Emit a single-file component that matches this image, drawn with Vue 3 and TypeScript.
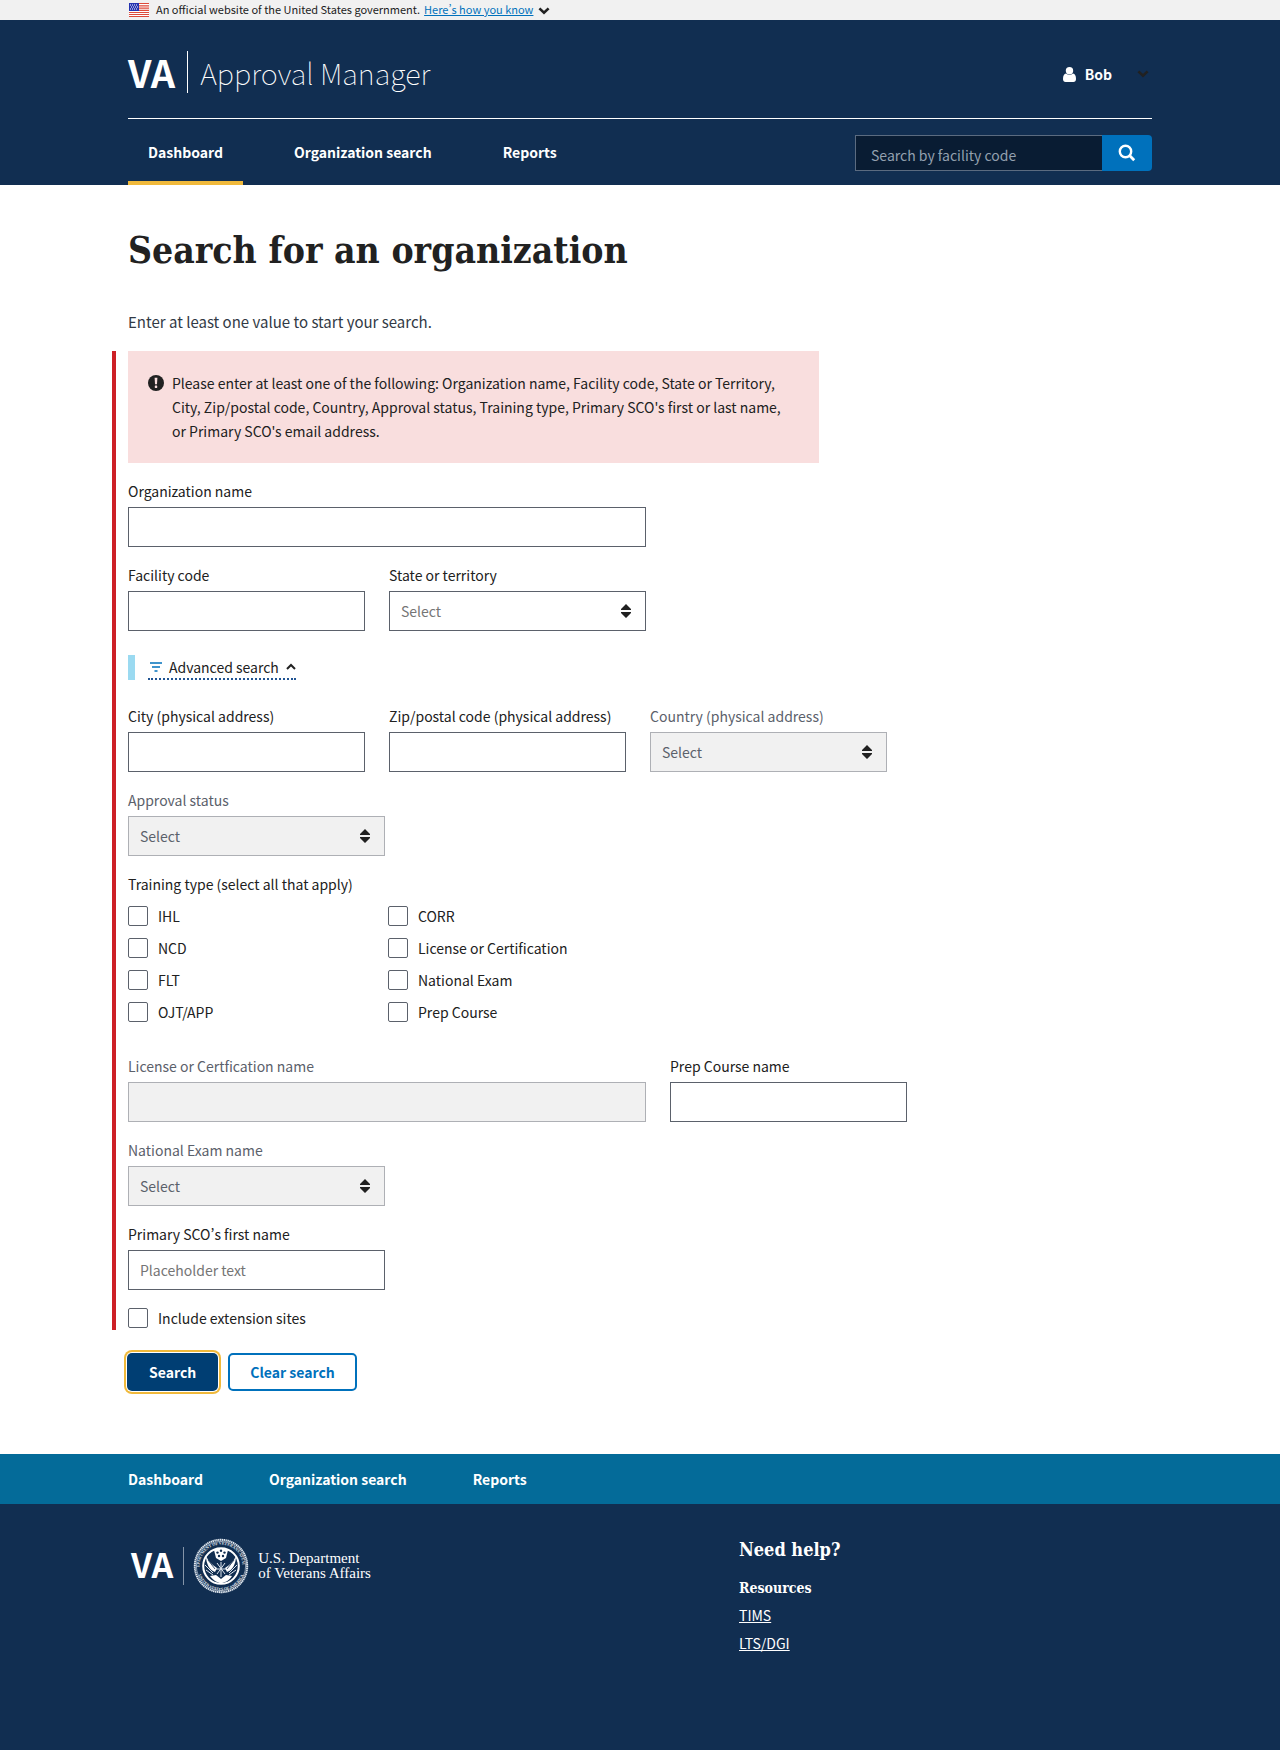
<script setup lang="ts">
import { reactive, ref } from 'vue'

interface NavItem {
  label: string
  active?: boolean
}

const navItems: NavItem[] = [
  { label: 'Dashboard', active: true },
  { label: 'Organization search' },
  { label: 'Reports' },
]

const trainingTypes: string[] = [
  'IHL',
  'NCD',
  'FLT',
  'OJT/APP',
  'CORR',
  'License or Certification',
  'National Exam',
  'Prep Course',
]

const form = reactive({
  organization: '',
  facilityCode: '',
  state: '',
  city: '',
  zip: '',
  country: '',
  approvalStatus: '',
  training: [] as string[],
  license: '',
  prepCourse: '',
  exam: '',
  scoFirstName: '',
  extensions: false,
})

const quickSearch = ref('')
const advancedOpen = ref(true)

function clearSearch(): void {
  Object.assign(form, {
    organization: '',
    facilityCode: '',
    state: '',
    city: '',
    zip: '',
    prepCourse: '',
    scoFirstName: '',
    training: [],
    extensions: false,
  })
}
</script>

<template>
  <div class="page">
    <div class="banner">
      <div class="wrap banner-row">
        <svg class="flag" width="20" height="14" viewBox="0 0 20 14" aria-hidden="true">
          <rect width="20" height="14" fill="#fff" />
          <path d="M0 .5h20M0 2.800h20M0 5.100h20M0 7.400h20M0 9.500h20M0 11.500h20M0 13.500h20" stroke="#dd4a3a" stroke-width="1.200" />
          <rect width="10" height="8" fill="#2433b0" />
          <path d="M1 2h8M2 4h8M1 6h8" stroke="#fff" stroke-width="1" stroke-dasharray="1 1" />
        </svg>
        <span>An official website of the United States government.</span>
        <a href="#" class="banner-link">Here’s how you know</a>
        <svg class="banner-chevron" width="12" height="8" viewBox="0 0 12 8" aria-hidden="true">
          <path d="M1.400 1.400 6 5.800l4.600-4.400" fill="none" stroke="#212121" stroke-width="2.600" />
        </svg>
      </div>
    </div>

    <header class="header">
      <div class="wrap">
        <div class="brand-row">
          <div class="brand">
            <span class="va">VA</span>
            <span class="brand-name">Approval Manager</span>
          </div>
          <button type="button" class="user">
            <svg width="13" height="15" viewBox="0 0 13 15" aria-hidden="true">
              <circle cx="6.500" cy="3.700" r="3.700" fill="#fff" />
              <path d="M3 6.600C1 7 0 9 0 12c0 2 1 3 2.600 3h7.800C12 15 13 14 13 12c0-3-1-5-3-5.400-2 1.900-5 1.900-7 0z" fill="#fff" />
            </svg>
            <span>Bob</span>
            <svg class="user-chevron" width="12" height="8" viewBox="0 0 12 8" aria-hidden="true">
              <path d="M1.400 1.400 6 5.800l4.600-4.400" fill="none" stroke="#212121" stroke-width="2.600" />
            </svg>
          </button>
        </div>
        <div class="nav-row">
          <nav class="nav" aria-label="Primary">
            <a v-for="item in navItems" :key="item.label" href="#" class="nav-link" :class="{ active: item.active }">{{ item.label }}</a>
          </nav>
          <form class="quick" role="search" @submit.prevent>
            <input v-model="quickSearch" type="text" placeholder="Search by facility code" aria-label="Search by facility code" />
            <button type="submit" aria-label="Search">
              <svg width="18" height="18" viewBox="0 0 18 18" fill="none" stroke="#fff" aria-hidden="true">
                <circle cx="7.500" cy="7.500" r="5.700" stroke-width="2.400" />
                <path d="m11.600 11.600 4.600 4.600" stroke-width="2.800" />
              </svg>
            </button>
          </form>
        </div>
      </div>
    </header>

    <main class="wrap main">
      <h1>Search for an organization</h1>
      <p class="intro">Enter at least one value to start your search.</p>

      <form @submit.prevent>
        <div class="fields">
          <div class="alert" role="alert">
            <svg width="16" height="16" viewBox="0 0 16 16" aria-hidden="true">
              <circle cx="8" cy="8" r="8" fill="#212121" />
              <path d="M6.600 2.800h2.800L9 9.200H7z" fill="#f9dede" />
              <rect x="6.800" y="10.600" width="2.400" height="2.400" rx=".4" fill="#f9dede" />
            </svg>
            <p>Please enter at least one of the following: Organization name, Facility code, State or Territory, City, Zip/postal code, Country, Approval status, Training type, Primary SCO's first or last name, or Primary SCO's email address.</p>
          </div>

          <div class="field w-lg">
            <label for="org">Organization name</label>
            <input id="org" v-model="form.organization" type="text" />
          </div>

          <div class="row">
            <div class="field w-sm">
              <label for="facility">Facility code</label>
              <input id="facility" v-model="form.facilityCode" type="text" />
            </div>
            <div class="field w-md">
              <label for="state">State or territory</label>
              <div class="select">
                <select id="state" v-model="form.state"><option value="">Select</option></select>
                <svg width="10" height="14" viewBox="0 0 10 14" aria-hidden="true"><path d="M5 0l5 5v1H0V5zM5 14l5-5V8H0v1z" fill="#212121" /></svg>
              </div>
            </div>
          </div>

          <div class="advanced">
            <button type="button" :aria-expanded="advancedOpen" @click="advancedOpen = !advancedOpen">
              <svg width="14" height="12" viewBox="0 0 14 12" stroke="#0071bc" stroke-width="1.600" aria-hidden="true">
                <path d="M2 2h12M4 6h8M6.500 10h3" />
              </svg>
              <span>Advanced search</span>
              <svg width="10" height="8" viewBox="0 0 10 8" aria-hidden="true">
                <path d="M1 6l4-4 4 4" fill="none" stroke="#212121" stroke-width="2" />
              </svg>
            </button>
          </div>

          <template v-if="advancedOpen">
            <div class="row">
              <div class="field w-sm">
                <label for="city">City (physical address)</label>
                <input id="city" v-model="form.city" type="text" />
              </div>
              <div class="field w-sm">
                <label for="zip">Zip/postal code (physical address)</label>
                <input id="zip" v-model="form.zip" type="text" />
              </div>
              <div class="field w-sm disabled">
                <label for="country">Country (physical address)</label>
                <div class="select">
                  <select id="country" v-model="form.country" disabled><option value="">Select</option></select>
                  <svg width="10" height="14" viewBox="0 0 10 14" aria-hidden="true"><path d="M5 0l5 5v1H0V5zM5 14l5-5V8H0v1z" fill="#212121" /></svg>
                </div>
              </div>
            </div>

            <div class="field w-md disabled">
              <label for="status">Approval status</label>
              <div class="select">
                <select id="status" v-model="form.approvalStatus" disabled><option value="">Select</option></select>
                <svg width="10" height="14" viewBox="0 0 10 14" aria-hidden="true"><path d="M5 0l5 5v1H0V5zM5 14l5-5V8H0v1z" fill="#212121" /></svg>
              </div>
            </div>

            <fieldset class="training">
              <legend>Training type (select all that apply)</legend>
              <div class="checks">
                <label v-for="type in trainingTypes" :key="type" class="check">
                  <input v-model="form.training" type="checkbox" :value="type" />
                  <span>{{ type }}</span>
                </label>
              </div>
            </fieldset>

            <div class="row">
              <div class="field w-lg disabled">
                <label for="license">License or Certfication name</label>
                <input id="license" v-model="form.license" type="text" disabled />
              </div>
              <div class="field w-sm">
                <label for="prep">Prep Course name</label>
                <input id="prep" v-model="form.prepCourse" type="text" />
              </div>
            </div>

            <div class="field w-md disabled">
              <label for="exam">National Exam name</label>
              <div class="select">
                <select id="exam" v-model="form.exam" disabled><option value="">Select</option></select>
                <svg width="10" height="14" viewBox="0 0 10 14" aria-hidden="true"><path d="M5 0l5 5v1H0V5zM5 14l5-5V8H0v1z" fill="#212121" /></svg>
              </div>
            </div>

            <div class="field w-md">
              <label for="sco">Primary SCO’s first name</label>
              <input id="sco" v-model="form.scoFirstName" type="text" placeholder="Placeholder text" />
            </div>

            <label class="check">
              <input v-model="form.extensions" type="checkbox" />
              <span>Include extension sites</span>
            </label>
          </template>
        </div>

        <div class="actions">
          <button type="submit" class="btn primary">Search</button>
          <button type="button" class="btn outline" @click="clearSearch">Clear search</button>
        </div>
      </form>
    </main>

    <footer class="footer">
      <div class="footer-bar">
        <nav class="wrap footer-nav" aria-label="Footer">
          <a v-for="item in navItems" :key="item.label" href="#">{{ item.label }}</a>
        </nav>
      </div>
      <div class="wrap footer-body">
        <div class="dept">
          <span class="va va-small">VA</span>
          <svg class="seal" width="56" height="56" viewBox="0 0 56 56" aria-hidden="true">
            <defs>
              <path id="seal-top" d="M6.500 28a21.500 21.500 0 0 1 43 0" />
              <path id="seal-bottom" d="M3.500 28a24.500 24.500 0 0 0 49 0" />
            </defs>
            <circle cx="28" cy="28" r="26.200" fill="none" stroke="#dfe6ee" stroke-width="2" stroke-dasharray="1.400 .5" />
            <circle cx="28" cy="28" r="24.600" fill="none" stroke="#dfe6ee" stroke-width=".6" />
            <text font-size="4" fill="#e6ecf3"><textPath href="#seal-top" startOffset="50%" text-anchor="middle">DEPARTMENT OF VETERANS AFFAIRS</textPath></text>
            <text font-size="4" fill="#e6ecf3"><textPath href="#seal-bottom" startOffset="50%" text-anchor="middle">UNITED STATES OF AMERICA</textPath></text>
            <circle cx="28" cy="28" r="17.800" fill="#112e51" stroke="#fff" stroke-width="2" />
            <path d="M21 12c4-2 10-2 14 0l-2 8-5 3-5-3z" fill="#fff" />
            <path d="M13 18c2 5 6 9 11 12l-2 4c-6-2-9-9-9-16zM43 18c-2 5-6 9-11 12l2 4c6-2 9-9 9-16z" fill="#fff" />
            <path d="M17 38c4 5 8 7 11 7s8-2 11-7l-6-1-5 4-5-4z" fill="#fff" />
            <path d="M12 27l8 8M44 27l-8 8M13 32l7 5M43 32l-7 5M24 25l8 11M32 25l-8 11M28 24v15M23 31h10" stroke="#dfe6ee" stroke-width="1" />
            <path d="M15 22l7 9M41 22l-7 9" stroke="#112e51" stroke-width=".8" />
            <g fill="#112e51">
              <circle cx="28" cy="12.800" r="1.200" /><circle cx="24.500" cy="14.600" r="1.200" /><circle cx="31.500" cy="14.600" r="1.200" />
              <circle cx="26" cy="18" r="1.200" /><circle cx="30" cy="18" r="1.200" />
            </g>
          </svg>
          <p class="dept-name">U.S. Department<br />of Veterans Affairs</p>
        </div>
        <div class="help">
          <h2>Need help?</h2>
          <h3>Resources</h3>
          <a href="#">TIMS</a>
          <a href="#">LTS/DGI</a>
        </div>
      </div>
    </footer>
  </div>
</template>

<style>
body {
  margin: 0;
  background: #fff;
}
</style>

<style scoped>
.page {
  display: flex;
  flex-direction: column;
  min-height: 100vh;
  color: #212121;
  font-family: 'Noto Sans CJK SC', 'Open Sans', sans-serif;
  font-size: 14px;
  font-variant-east-asian: proportional-width;
  line-height: 20px;
}

.page * {
  box-sizing: border-box;
}

.page button,
.page input,
.page select {
  margin: 0;
  font: inherit;
}

p,
h1,
h2,
h3 {
  margin: 0;
}

.wrap {
  width: 80%;
  margin: 0 auto;
}

.banner {
  background: #f1f1f1;
}

.banner-row {
  display: flex;
  align-items: center;
  height: 20px;
  font-size: 11px;
  line-height: 16px;
}

.banner-row span,
.banner-row a {
  padding-bottom: 2px;
}

.flag {
  margin: 0 7px 0 1px;
}

.banner-link {
  margin-left: 4px;
  color: #0071bc;
}

.banner-chevron {
  margin: 2px 0 0 5px;
}

.header {
  background: #112e51;
  color: #fff;
}

.brand-row {
  display: flex;
  align-items: center;
  justify-content: space-between;
  height: 99px;
  padding-top: 10px;
  border-bottom: 1px solid #fff;
}

.brand {
  display: flex;
  align-items: center;
  padding-bottom: 4px;
}

.va {
  font-size: 38px;
  line-height: 42px;
  font-weight: 700;
}

.brand-name {
  margin-left: 12px;
  padding-left: 12px;
  border-left: 1px solid #fff;
  font-size: 29px;
  font-weight: 100;
  line-height: 42px;
}

.user {
  display: flex;
  align-items: center;
  padding: 0 3px 0 0;
  border: 0;
  background: none;
  color: #fff;
}

.page .user {
  font-weight: 700;
}

.user span {
  margin: 0 25px 0 9px;
}

.nav-row {
  display: flex;
  align-items: center;
  justify-content: space-between;
  height: 66px;
}

.nav {
  display: flex;
  gap: 31px;
  height: 100%;
}

.nav-link {
  padding: 23px 20px 0;
  border-bottom: 4px solid transparent;
  color: #fff;
  font-weight: 700;
  text-decoration: none;
}

.nav-link.active {
  border-color: #f0b93b;
}

.quick {
  display: flex;
  width: 297px;
  height: 36px;
  margin-top: 2px;
}

.quick input {
  flex: 1;
  min-width: 0;
  padding: 4px 15px 0;
  border: 1px solid #5b6b80;
  border-right: 0;
  border-radius: 0;
  background: #091c33;
  color: #fff;
}

.quick input::placeholder {
  color: #93a0af;
}

.quick button {
  display: flex;
  align-items: center;
  justify-content: center;
  width: 50px;
  padding: 0;
  border: 0;
  border-radius: 0 4px 4px 0;
  background: #0071bc;
}

.main {
  padding: 39px 0 63px;
}

h1 {
  font-family: 'DejaVu Serif Condensed', 'DejaVu Serif', serif;
  font-size: 37px;
  line-height: 52px;
  font-weight: 700;
}

.intro {
  margin: 36px 0 19px;
  color: #323a45;
  font-size: 15px;
  line-height: 20px;
}

.fields {
  display: flex;
  flex-direction: column;
  gap: 18px;
  margin-left: -16px;
  padding: 0 0 2px 12px;
  border-left: 4px solid #cd2026;
}

.alert {
  display: flex;
  gap: 8px;
  max-width: 691px;
  padding: 20px 28px 20px 20px;
  background: #f9dede;
  line-height: 24px;
}

.alert svg {
  flex: none;
  margin-top: 4px;
}

.row {
  display: flex;
  flex-wrap: wrap;
  gap: 18px 24px;
}

.w-sm {
  width: 237px;
}

.w-md {
  width: 257px;
}

.w-lg {
  width: 518px;
}

.field > label {
  display: block;
  margin-bottom: 6px;
  white-space: nowrap;
}

.field input,
.field select {
  display: block;
  width: 100%;
  height: 40px;
  padding: 0 11px;
  border: 1px solid #5b616b;
  border-radius: 0;
  background: #fff;
  color: #757575;
}

.field select {
  appearance: none;
  opacity: 1;
}

.field input::placeholder {
  color: #757575;
}

.disabled > label {
  color: #5b616b;
}

.disabled input,
.disabled select {
  border-color: #aeb0b5;
  background: #f1f1f1;
  color: #5b616b;
}

.select {
  position: relative;
}

.select svg {
  position: absolute;
  top: 13px;
  right: 15px;
  pointer-events: none;
}

.advanced {
  margin: 6px 0 8px;
  padding-left: 13px;
  border-left: 7px solid #9bdaf1;
}

.advanced button {
  display: flex;
  align-items: center;
  gap: 7px;
  height: 25px;
  padding: 0;
  border: 0;
  border-bottom: 2px dotted #205493;
  background: none;
  color: #212121;
}

.training {
  min-width: 0;
  margin: 0 0 16px;
  padding: 0;
  border: 0;
}

.training legend {
  margin-bottom: 12px;
  padding: 0;
}

.checks {
  display: grid;
  grid-template-rows: repeat(4, 20px);
  grid-auto-flow: column;
  grid-auto-columns: 260px;
  gap: 12px 0;
}

.check {
  display: flex;
  align-items: center;
  gap: 10px;
}

.check input {
  appearance: none;
  width: 20px;
  height: 20px;
  border: 1px solid #5b616b;
  border-radius: 2px;
  background: #fff;
}

.check input:checked {
  background: #0071bc;
}

.actions {
  display: flex;
  gap: 10px;
  margin: 23px 0 0 -1px;
}

.btn {
  height: 38px;
  border-radius: 5px;
}

.page .btn {
  font-weight: 700;
  line-height: 24px;
}

.primary {
  padding: 0 22px;
  border: 0;
  background: #003e73;
  color: #fff;
  box-shadow: 0 0 0 1px #fff, 0 0 0 3px #f0b93b;
}

.outline {
  padding: 0 20px;
  border: 2px solid #0071bc;
  background: #fff;
  color: #0071bc;
}

.footer {
  display: flex;
  flex: 1;
  flex-direction: column;
  background: #112e51;
  color: #fff;
}

.footer a {
  color: #fff;
}

.footer-bar {
  background: #046b99;
}

.footer-nav {
  display: flex;
  gap: 66px;
  align-items: center;
  height: 50px;
  font-weight: 700;
}

.footer-nav a {
  text-decoration: none;
}

.footer-body {
  display: grid;
  grid-template-columns: 611px 1fr;
  align-items: start;
  padding: 32px 0 80px;
}

.dept {
  display: flex;
  align-items: center;
  padding: 2px 0 0 3px;
}

.va-small {
  padding: 0 10px 4px 0;
  border-right: 1px solid #8494a8;
  font-size: 34px;
  line-height: 34px;
}

.seal {
  margin: 0 9px;
}

.seal text {
  font-family: 'Liberation Serif', serif;
  font-weight: 700;
}

.dept-name {
  font-family: 'Liberation Serif', serif;
  font-size: 15px;
  line-height: 15px;
}

.help {
  display: flex;
  flex-direction: column;
  align-items: flex-start;
}

.help h2,
.help h3 {
  font-family: 'DejaVu Serif Condensed', 'DejaVu Serif', serif;
  font-weight: 700;
}

.help h2 {
  font-size: 18px;
  line-height: 28px;
}

.help h3 {
  margin: 14px 0 7px;
  font-size: 14px;
  line-height: 20px;
}

.help a {
  margin-bottom: 8px;
}
</style>
